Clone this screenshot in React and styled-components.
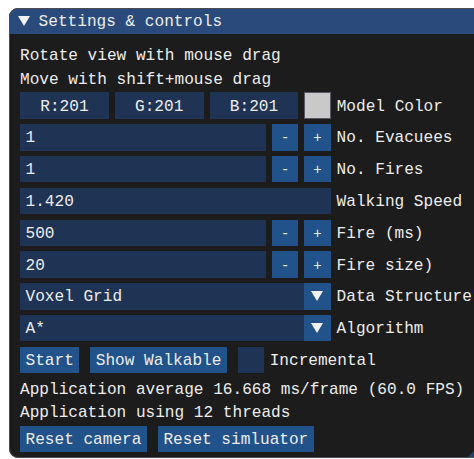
import React from 'react';
import styled, { createGlobalStyle } from 'styled-components';

const GlobalStyle = createGlobalStyle`
  html, body {
    margin: 0;
    padding: 0;
    background: #ffffff;
    overflow: hidden;
  }
  body {
    font-family: "Liberation Mono", "DejaVu Sans Mono", monospace;
  }
`;

const Page = styled.div`
  width: 474px;
  height: 459px;
  box-sizing: border-box;
  padding: 8px 0 0 9px;
  overflow: hidden;
`;

const Window = styled.div`
  position: relative;
  width: 480px;
  height: 450px;
  background: #1c1c1c;
  border-radius: 9px;
  overflow: hidden;
  color: #ededed;
  font-size: 16.1px;

  &::after {
    content: '';
    position: absolute;
    inset: 0;
    border: 1px solid #4b4b55;
    border-radius: 9px;
    pointer-events: none;
  }
`;

const TitleBar = styled.div`
  display: flex;
  align-items: center;
  gap: 8.3px;
  height: 26.3px;
  padding-left: 9.3px;
  background: #294a7a;
`;

const TitleText = styled.span`
  line-height: 26.3px;
  padding-top: 1px;
`;

const Body = styled.div`
  display: flex;
  flex-direction: column;
  gap: 5.5px;
  padding: 11.2px 0 0 11px;
`;

const TextLine = styled.div`
  height: 18px;
  line-height: 18px;
  padding-top: 2px;
  box-sizing: border-box;
  white-space: pre;
`;

const Row = styled.div`
  display: flex;
  align-items: center;
  gap: ${p => p.gap || 6}px;
  height: 26.3px;
`;

const Frame = styled.div`
  display: flex;
  align-items: center;
  justify-content: ${p => (p.center ? 'center' : 'flex-start')};
  width: ${p => p.w}px;
  height: 26.3px;
  box-sizing: border-box;
  padding: 2px 5.5px 0;
  background: #1f3454;
  white-space: pre;
`;

const Button = styled.div`
  display: flex;
  align-items: center;
  justify-content: center;
  height: 26.3px;
  min-width: 26.3px;
  box-sizing: border-box;
  padding: 2px ${p => (p.square ? 0 : 5.5)}px 0;
  background: #22528a;
  white-space: pre;
  font-size: ${p => (p.square ? '14px' : 'inherit')};
`;

const Label = styled.span`
  padding-top: 2px;
  white-space: pre;
`;

const Swatch = styled.div`
  width: 26.3px;
  height: 26.3px;
  box-sizing: border-box;
  background: #c9c9c9;
  border: 1px solid #5a5a66;
`;

const Combo = styled.div`
  display: flex;
  width: 310.6px;
  height: 26.3px;
  background: #1f3454;
`;

const ComboText = styled.div`
  flex: 1;
  padding: 2px 5.5px 0;
  display: flex;
  align-items: center;
  white-space: pre;
`;

const ComboArrow = styled.div`
  width: 26.3px;
  height: 26.3px;
  display: flex;
  align-items: center;
  justify-content: center;
  background: #22528a;
`;

const Checkbox = styled.div`
  width: 26.3px;
  height: 26.3px;
  background: #1f3454;
`;

const Grip = styled.div`
  position: absolute;
  right: 0;
  bottom: 0;
  width: 22px;
  height: 22px;
  background: #20416a;
  clip-path: polygon(100% 0, 100% 100%, 0 100%);
`;

const DownTriangle = ({ w = 12, h = 10 }) => (
  <svg width={w} height={h} viewBox={`0 0 ${w} ${h}`}>
    <polygon points={`0,0 ${w},0 ${w / 2},${h}`} fill="#f2f2f2" />
  </svg>
);

const Stepper = ({ value, label }) => (
  <Row>
    <Frame w={246}>{value}</Frame>
    <Button square>-</Button>
    <Button square>+</Button>
    <Label>{label}</Label>
  </Row>
);

const ComboRow = ({ value, label }) => (
  <Row>
    <Combo>
      <ComboText>{value}</ComboText>
      <ComboArrow>
        <DownTriangle w={12} h={10} />
      </ComboArrow>
    </Combo>
    <Label>{label}</Label>
  </Row>
);

export default function App() {
  return (
    <Page>
      <GlobalStyle />
      <Window>
        <TitleBar>
          <DownTriangle w={12} h={10} />
          <TitleText>Settings &amp; controls</TitleText>
        </TitleBar>
        <Body>
          <TextLine>Rotate view with mouse drag</TextLine>
          <TextLine>Move with shift+mouse drag</TextLine>
          <Row>
            <Frame w={88.8} center>R:201</Frame>
            <Frame w={88.8} center>G:201</Frame>
            <Frame w={88.8} center>B:201</Frame>
            <Swatch />
            <Label>Model Color</Label>
          </Row>
          <Stepper value="1" label="No. Evacuees" />
          <Stepper value="1" label="No. Fires" />
          <Row>
            <Frame w={310.6}>1.420</Frame>
            <Label>Walking Speed</Label>
          </Row>
          <Stepper value="500" label="Fire (ms)" />
          <Stepper value="20" label="Fire size)" />
          <ComboRow value="Voxel Grid" label="Data Structure" />
          <ComboRow value="A*" label="Algorithm" />
          <Row gap={11}>
            <Button>Start</Button>
            <Button>Show Walkable</Button>
            <Row gap={5.5}>
              <Checkbox />
              <Label>Incremental</Label>
            </Row>
          </Row>
          <TextLine>Application average 16.668 ms/frame (60.0 FPS)</TextLine>
          <TextLine>Application using 12 threads</TextLine>
          <Row gap={11}>
            <Button>Reset camera</Button>
            <Button>Reset simluator</Button>
          </Row>
        </Body>
        <Grip />
      </Window>
    </Page>
  );
}
